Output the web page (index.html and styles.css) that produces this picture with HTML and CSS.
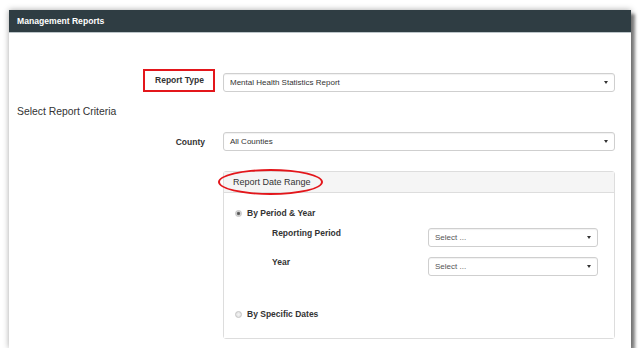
FILE: index.html
```html
<!DOCTYPE html>
<html lang="en">
<head>
  <meta charset="UTF-8">
  <meta name="viewport" content="width=device-width, initial-scale=1.0">
  <title>Management Reports</title>
  <link rel="stylesheet" href="styles.css">
</head>
<body>
  <div class="window">
    <div class="window-header">Management Reports</div>

    <div class="window-body">
      <!-- Tipo di report -->
      <div class="form-row report-type-row">
        <div class="form-label"><span class="highlight-box">Report Type</span></div>
        <div class="select-box">Mental Health Statistics Report<span class="caret"></span></div>
      </div>

      <h3 class="section-title">Select Report Criteria</h3>

      <div class="form-row">
        <div class="form-label">County</div>
        <div class="select-box">All Counties<span class="caret"></span></div>
      </div>

      <!-- Intervallo date -->
      <div class="form-row panel-row">
        <div></div>
        <div class="panel">
          <div class="panel-heading"><span class="highlight-ellipse">Report Date Range</span></div>
          <div class="panel-body">
            <div class="radio-row">
              <span class="radio checked"></span>By Period &amp; Year
            </div>
            <div class="sub-row">
              <div class="sub-label">Reporting Period</div>
              <div class="select-box small">Select ...<span class="caret"></span></div>
            </div>
            <div class="sub-row">
              <div class="sub-label">Year</div>
              <div class="select-box small">Select ...<span class="caret"></span></div>
            </div>
            <div class="radio-row last">
              <span class="radio"></span>By Specific Dates
            </div>
          </div>
        </div>
      </div>
    </div>
  </div>
</body>
</html>
```

FILE: styles.css
```css
body {
  margin: 0;
  padding: 0;
  background-color: #ffffff;
  font-family: "Liberation Sans", Arial, sans-serif;
  color: #333333;
}

.window {
  margin: 10px 0 0 9px;
  width: 622px;
  height: 338px;
  background-color: #ffffff;
  box-shadow: 4px 4px 3px rgba(0, 0, 0, 0.45), 0 0 6px rgba(0, 0, 0, 0.35);
  overflow: hidden;
}

.window-header {
  height: 22px;
  line-height: 22px;
  padding-left: 8px;
  background-color: #2f3d43;
  border-bottom: 1px solid #bcc5c9;
  color: #ffffff;
  font-size: 8.6px;
  font-weight: bold;
}

.window-body {
  padding: 36px 16px 0 0;
}

.form-row {
  display: grid;
  grid-template-columns: 214px 1fr;
  align-items: center;
}

.report-type-row {
  align-items: end;
}

.form-label {
  text-align: right;
  padding-right: 18px;
  font-size: 8.5px;
  font-weight: bold;
}

.report-type-row .form-label {
  padding-right: 8px;
}

.highlight-box {
  display: inline-block;
  height: 19px;
  line-height: 19px;
  padding: 0 9px 0 10px;
  border: 2px solid #e3161b;
}

.select-box {
  position: relative;
  height: 17px;
  line-height: 17px;
  padding-left: 6px;
  border: 1px solid #cfcfcf;
  border-radius: 3px;
  box-shadow: inset 0 1px 1px rgba(0, 0, 0, 0.06);
  font-size: 8px;
  color: #333333;
}

.select-box.small {
  color: #555555;
}

.caret {
  position: absolute;
  right: 6px;
  top: 7px;
  width: 0;
  height: 0;
  border-left: 2.5px solid transparent;
  border-right: 2.5px solid transparent;
  border-top: 3.5px solid #333333;
}

.section-title {
  margin: 13px 0 13px 8px;
  font-size: 10.4px;
  line-height: 14px;
  font-weight: normal;
  color: #333333;
}

.panel-row {
  margin-top: 20px;
}

.panel {
  border: 1px solid #dddddd;
  border-radius: 3px;
}

.panel-heading {
  height: 20px;
  line-height: 20px;
  padding-left: 9px;
  background-color: #f5f5f5;
  border-bottom: 1px solid #dddddd;
  font-size: 9px;
  color: #333333;
}

.highlight-ellipse {
  position: relative;
  display: inline-block;
}

.highlight-ellipse::after {
  content: "";
  position: absolute;
  left: -15px;
  top: -3px;
  width: 101px;
  height: 22px;
  border: 2px solid #e3161b;
  border-radius: 50%;
}

.panel-body {
  height: 131px;
  padding: 14px 16px 0 11px;
  background-color: #ffffff;
}

.radio-row {
  display: flex;
  align-items: center;
  height: 12px;
  font-size: 8.5px;
  font-weight: bold;
}

.radio-row.last {
  margin-top: 32px;
}

.radio {
  width: 5px;
  height: 5px;
  margin-right: 5px;
  border: 1px solid #c4c4c4;
  border-radius: 50%;
  background: radial-gradient(circle, #f4f4f4 0%, #dcdcdc 100%);
}

.radio.checked {
  background: radial-gradient(circle, #555555 0%, #666666 35%, #d8d8d8 60%);
}

.sub-row {
  display: grid;
  grid-template-columns: 156px 170px;
  align-items: start;
  padding-left: 37px;
  margin-top: 9px;
}

.sub-row + .sub-row {
  margin-top: 10px;
}

.sub-label {
  line-height: 10px;
  font-size: 8.5px;
  font-weight: bold;
}
```
